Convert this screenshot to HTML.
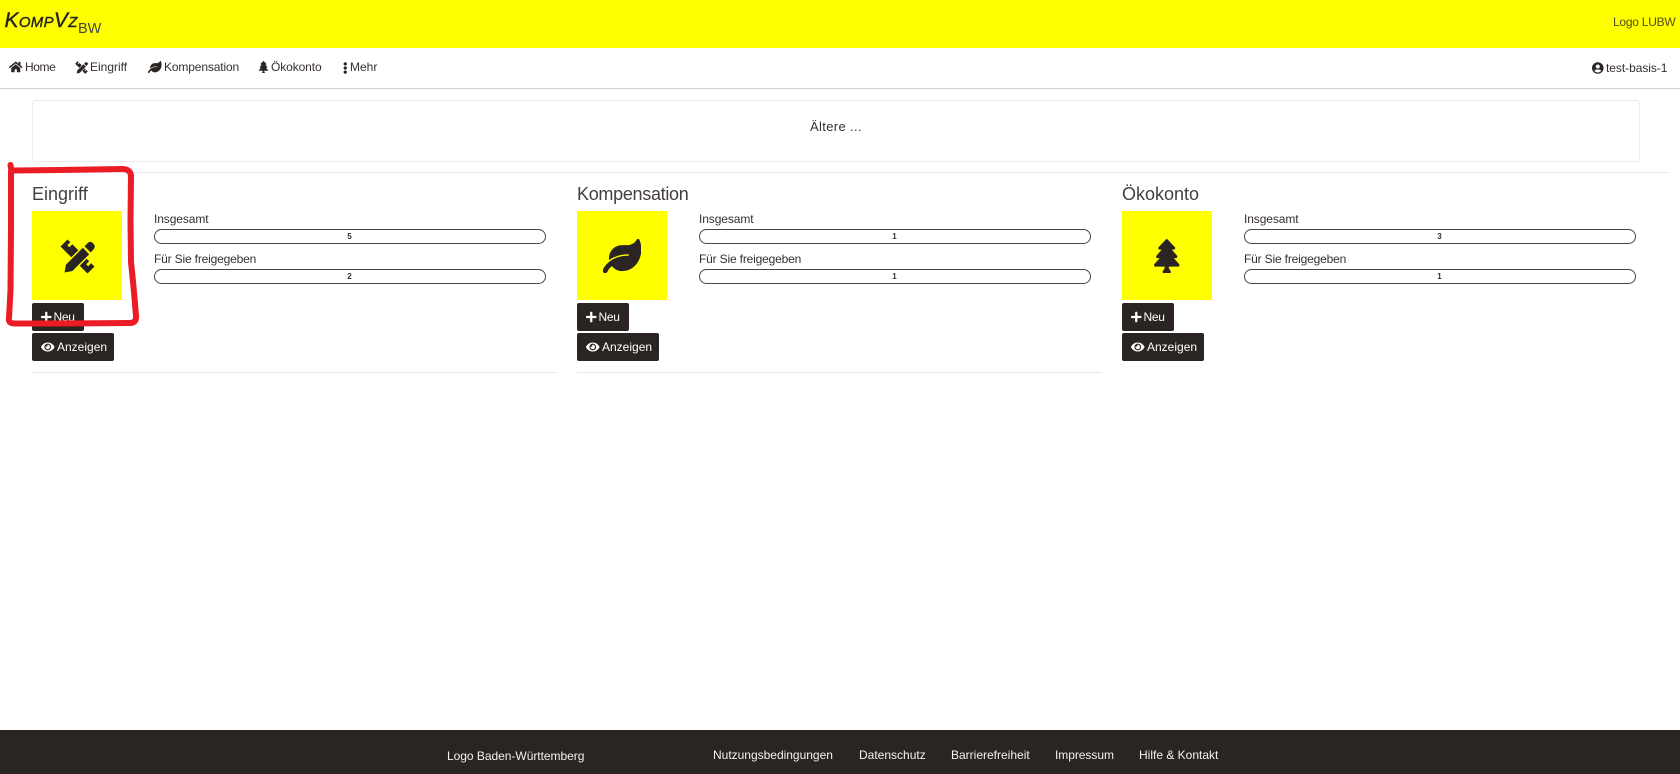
<!DOCTYPE html>
<html lang="de">
<head>
<meta charset="utf-8">
<title>KompVzBW</title>
<style>
html,body{margin:0;padding:0;background:#fff}
body{position:relative;width:1680px;height:774px;overflow:hidden;font-family:"Liberation Sans",sans-serif;font-size:12px;color:#35302d;filter:blur(.35px)}
.a{position:absolute;white-space:nowrap;line-height:16px}
svg.i{position:absolute;fill:#2a2522;display:block}
.hdr{position:absolute;left:0;top:0;width:1680px;height:47.5px;background:#ff0}
.navline{position:absolute;left:0;top:88px;width:1680px;height:1px;background:#d3cfc9}
.card{position:absolute;left:32px;top:100px;width:1606px;height:60px;border:1px solid #ececec;border-radius:3px}
.hr{position:absolute;height:1px;background:#e8e8e8}
.y{position:absolute;top:211px;width:90px;height:89px;background:#ff0}
.btn{position:absolute;height:28px;background:#2a2522;border-radius:2px}
.bar{position:absolute;width:390px;height:13px;border:1px solid #4a4543;border-radius:8px;background:#fff}
.num{position:absolute;width:392px;text-align:center;font-size:8px;font-weight:bold;line-height:15px}
.lab{position:absolute;white-space:nowrap;line-height:16px;letter-spacing:-.1px}
.h{position:absolute;top:184px;font-size:18px;line-height:20px;white-space:nowrap;color:#45403d}
.w{color:#fff;position:absolute;white-space:nowrap;line-height:16px}
.ftr{position:absolute;left:0;top:730px;width:1680px;height:44px;background:#2a2522}
.f{position:absolute;top:747px;color:#f2f2f2;white-space:nowrap;line-height:16px}
</style>
</head>
<body>
<svg width="0" height="0" style="position:absolute">
<symbol id="home" viewBox="0 0 576 512"><path d="M280.37 148.26L96 300.11V464a16 16 0 0 0 16 16l112.06-.29a16 16 0 0 0 15.92-16V368a16 16 0 0 1 16-16h64a16 16 0 0 1 16 16v95.64a16 16 0 0 0 16 16.05L464 480a16 16 0 0 0 16-16V300L295.67 148.26a12.19 12.19 0 0 0-15.3 0zM571.6 251.47L488 182.56V44.05a12 12 0 0 0-12-12h-56a12 12 0 0 0-12 12v72.61L318.47 43a48 48 0 0 0-61 0L4.34 251.47a12 12 0 0 0-1.6 16.9l25.5 31A12 12 0 0 0 45.15 301l235.22-193.74a12.19 12.19 0 0 1 15.3 0L530.9 301a12 12 0 0 0 16.9-1.6l25.5-31a12 12 0 0 0-1.7-16.93z"/></symbol>
<symbol id="pr" viewBox="4 4 35 35"><path d="M8.5 37.5L10 29.6L26.8 12.8L33.2 19.2L18.5 33.9L16.5 36ZM28.5 11.3L31.8 8Q34 6 36.3 7.6L37.9 9.2Q39.6 11.5 38 13.8L34.7 17.5ZM11.5 4.5L14.3 7.3L11.3 10.3L13.3 12.3L16.3 9.3L22.3 15.3L15.3 22.3L4.5 11.5ZM30.7 23.7L33.2 26.2L30.2 29.2L32.2 31.2L35.2 28.2L38.5 31.5L31.5 38.5L23.7 30.7Z"/></symbol>
<symbol id="leaf" viewBox="0 0 576 512"><path stroke="#2a2522" stroke-width="10" d="M546.2 9.7c-5.6-12.5-21.6-13-28.3-1.2C486.9 62.4 431.4 96 368 96h-80C182 96 96 182 96 288c0 7 .8 13.7 1.5 20.5C161.3 262.8 253.4 224 384 224c8.8 0 16 7.2 16 16s-7.2 16-16 16C132.6 256 26 410.1 2.4 468c-6.6 16.3 1.2 34.9 17.5 41.6 16.4 6.8 35-1.1 41.8-17.3 1.5-3.6 20.9-47.9 71.9-90.6 32.4 43.9 94 85.8 174.9 77.2C465.5 467.5 576 326.7 576 154.3c0-50.2-10.8-102.2-29.8-144.6z"/></symbol>
<symbol id="tree" viewBox="0 0 384 512"><path d="M378.31 378.49L298.42 288h30.63c9.01 0 16.98-5 20.78-13.06 3.8-8.04 2.55-17.26-3.28-24.05L268.42 160h28.89c9.1 0 17.3-5.35 20.86-13.61 3.52-8.13 1.86-17.59-4.24-24.08L203.66 4.83c-6.03-6.45-17.28-6.45-23.32 0L70.06 122.31c-6.1 6.49-7.75 15.95-4.24 24.08C69.38 154.65 77.59 160 86.69 160h28.89l-78.14 90.91c-5.81 6.78-7.06 15.99-3.27 24.04C37.97 283 45.93 288 54.95 288h30.63L5.69 378.49c-6 6.79-7.36 16.09-3.56 24.26 3.75 8.05 12 13.25 21.01 13.25H160v24.45l-30.29 48.4c-5.32 10.64 2.42 23.16 14.31 23.16h95.96c11.89 0 19.63-12.52 14.31-23.16L224 440.45V416h136.86c9.01 0 17.26-5.2 21.01-13.25 3.8-8.17 2.44-17.47-3.56-24.26z"/></symbol>
<symbol id="dots" viewBox="0 0 192 512"><path d="M96 184c39.8 0 72 32.2 72 72s-32.2 72-72 72-72-32.2-72-72 32.2-72 72-72zM24 80c0 39.8 32.2 72 72 72s72-32.2 72-72S135.8 8 96 8 24 40.2 24 80zm0 352c0 39.8 32.2 72 72 72s72-32.2 72-72-32.2-72-72-72-72 32.2-72 72z"/></symbol>
<symbol id="user" viewBox="0 0 496 512"><path d="M248 8C111 8 0 119 0 256s111 248 248 248 248-111 248-248S385 8 248 8zm0 96c48.6 0 88 39.4 88 88s-39.4 88-88 88-88-39.4-88-88 39.4-88 88-88zm0 344c-58.7 0-111.3-26.6-146.5-68.2 18.8-35.4 55.6-59.8 98.5-59.8 2.4 0 4.8.4 7.1 1.1 13 4.2 26.6 6.9 40.9 6.9 14.3 0 28-2.7 40.9-6.9 2.3-.7 4.7-1.1 7.1-1.1 42.9 0 79.7 24.4 98.5 59.8C359.3 421.4 306.7 448 248 448z"/></symbol>
<symbol id="plus" viewBox="0 0 448 512"><path d="M416 208H272V64c0-17.67-14.33-32-32-32h-32c-17.67 0-32 14.33-32 32v144H32c-17.67 0-32 14.33-32 32v32c0 17.67 14.33 32 32 32h144v144c0 17.67 14.33 32 32 32h32c17.67 0 32-14.33 32-32V304h144c17.67 0 32-14.33 32-32v-32c0-17.67-14.33-32-32-32z"/></symbol>
<symbol id="eye" viewBox="0 0 576 512"><path d="M572.52 241.4C518.29 135.59 410.93 64 288 64S57.68 135.64 3.48 241.41a32.35 32.35 0 0 0 0 29.19C57.71 376.41 165.07 448 288 448s230.32-71.64 284.52-177.41a32.35 32.35 0 0 0 0-29.19zM288 400a144 144 0 1 1 144-144 143.93 143.93 0 0 1-144 144zm0-240a95.31 95.31 0 0 0-25.31 3.79 47.85 47.85 0 0 1-66.9 66.9A95.78 95.78 0 1 0 288 160z"/></symbol>
</svg>

<div class="hdr"></div>
<div class="a" style="left:4.5px;top:9px;line-height:24px;font-size:21px;font-style:italic;color:#2a2522;-webkit-text-stroke:.4px #2a2522;letter-spacing:.3px">K<span style="font-size:15px">OMP</span>V<span style="font-size:15px">Z</span></div>
<div class="a" style="left:78px;top:20px;line-height:18px;font-size:14.5px;color:#444">BW</div>
<div class="a" style="left:1613px;top:14px;color:#4f4f10;letter-spacing:-.25px">Logo LUBW</div>

<svg class="i" style="left:9px;top:61px" width="13.5" height="12"><use href="#home"/></svg>
<div class="a" style="left:25px;top:59px;letter-spacing:-.4px">Home</div>
<svg class="i" style="left:75px;top:61px" width="13" height="13"><use href="#pr"/></svg>
<div class="a" style="left:90px;top:59px">Eingriff</div>
<svg class="i" style="left:148px;top:61px" width="13.5" height="12"><use href="#leaf"/></svg>
<div class="a" style="left:164px;top:59px;letter-spacing:-.14px">Kompensation</div>
<svg class="i" style="left:258.5px;top:61px" width="9" height="12"><use href="#tree"/></svg>
<div class="a" style="left:271px;top:59px;letter-spacing:-.1px">Ökokonto</div>
<svg class="i" style="left:343px;top:62px" width="4.5" height="12"><use href="#dots"/></svg>
<div class="a" style="left:350px;top:59px">Mehr</div>
<svg class="i" style="left:1592px;top:62px" width="11.6" height="12"><use href="#user"/></svg>
<div class="a" style="left:1606px;top:60px;letter-spacing:-.05px">test-basis-1</div>
<div class="navline"></div>

<div class="card"></div>
<div class="a" style="left:810px;top:119px;font-size:13px;letter-spacing:.35px">Ältere ...</div>
<div class="hr" style="left:12px;top:172px;width:1656px"></div>

<!-- Eingriff -->
<div class="h" style="left:32px">Eingriff</div>
<div class="y" style="left:32px"></div>
<svg class="i" style="left:60px;top:239px" width="35" height="35"><use href="#pr"/></svg>
<div class="btn" style="left:32px;top:303px;width:52px"></div>
<svg class="i" style="left:41px;top:311px;fill:#fff" width="10.5" height="12"><use href="#plus"/></svg>
<div class="w" style="left:53.5px;top:309px;letter-spacing:-.3px">Neu</div>
<div class="btn" style="left:32px;top:333px;width:82px"></div>
<svg class="i" style="left:41px;top:341px;fill:#fff" width="13.5" height="12"><use href="#eye"/></svg>
<div class="w" style="left:57px;top:339px">Anzeigen</div>
<div class="lab" style="left:154px;top:211px">Insgesamt</div>
<div class="bar" style="left:153.5px;top:229px"></div><div class="num" style="left:153.5px;top:229px">5</div>
<div class="lab" style="left:154px;top:251px;letter-spacing:-.17px">Für Sie freigegeben</div>
<div class="bar" style="left:153.5px;top:269px"></div><div class="num" style="left:153.5px;top:269px">2</div>
<div class="hr" style="left:32px;top:372px;width:525px"></div>

<!-- Kompensation -->
<div class="h" style="left:577px;letter-spacing:-.3px">Kompensation</div>
<div class="y" style="left:577px"></div>
<svg class="i" style="left:603px;top:239px" width="38" height="34"><use href="#leaf"/></svg>
<div class="btn" style="left:577px;top:303px;width:52px"></div>
<svg class="i" style="left:586px;top:311px;fill:#fff" width="10.5" height="12"><use href="#plus"/></svg>
<div class="w" style="left:598.5px;top:309px;letter-spacing:-.3px">Neu</div>
<div class="btn" style="left:577px;top:333px;width:82px"></div>
<svg class="i" style="left:586px;top:341px;fill:#fff" width="13.5" height="12"><use href="#eye"/></svg>
<div class="w" style="left:602px;top:339px">Anzeigen</div>
<div class="lab" style="left:699px;top:211px">Insgesamt</div>
<div class="bar" style="left:698.5px;top:229px"></div><div class="num" style="left:698.5px;top:229px">1</div>
<div class="lab" style="left:699px;top:251px;letter-spacing:-.17px">Für Sie freigegeben</div>
<div class="bar" style="left:698.5px;top:269px"></div><div class="num" style="left:698.5px;top:269px">1</div>
<div class="hr" style="left:577px;top:372px;width:525px"></div>

<!-- Ökokonto -->
<div class="h" style="left:1122px">Ökokonto</div>
<div class="y" style="left:1122px"></div>
<svg class="i" style="left:1154px;top:239px" width="25.5" height="34"><use href="#tree"/></svg>
<div class="btn" style="left:1122px;top:303px;width:52px"></div>
<svg class="i" style="left:1131px;top:311px;fill:#fff" width="10.5" height="12"><use href="#plus"/></svg>
<div class="w" style="left:1143.5px;top:309px;letter-spacing:-.3px">Neu</div>
<div class="btn" style="left:1122px;top:333px;width:82px"></div>
<svg class="i" style="left:1131px;top:341px;fill:#fff" width="13.5" height="12"><use href="#eye"/></svg>
<div class="w" style="left:1147px;top:339px">Anzeigen</div>
<div class="lab" style="left:1244px;top:211px">Insgesamt</div>
<div class="bar" style="left:1243.5px;top:229px"></div><div class="num" style="left:1243.5px;top:229px">3</div>
<div class="lab" style="left:1244px;top:251px;letter-spacing:-.17px">Für Sie freigegeben</div>
<div class="bar" style="left:1243.5px;top:269px"></div><div class="num" style="left:1243.5px;top:269px">1</div>

<!-- red annotation -->
<svg style="position:absolute;left:0;top:0" width="1680" height="774" fill="none">
<path d="M10.5 165 L11.5 171 L14 170.5 L60 170 L122 169 Q130.5 169 131 176 L130.5 220 L131 262 Q134 290 136 316 Q136.5 323 130 323 L60 323.5 L15 323.5 Q8 323.5 9 318 L10.5 290 L11 230 L11 171" stroke="#ec1c24" stroke-width="6" stroke-linecap="round" stroke-linejoin="round"/>
</svg>

<div class="ftr"></div>
<div class="f" style="left:447px;top:748px;letter-spacing:-.03px">Logo Baden-Württemberg</div>
<div class="f" style="left:713px;letter-spacing:-.01px">Nutzungsbedingungen</div>
<div class="f" style="left:859px">Datenschutz</div>
<div class="f" style="left:951px">Barrierefreiheit</div>
<div class="f" style="left:1055px;letter-spacing:-.05px">Impressum</div>
<div class="f" style="left:1139px">Hilfe &amp; Kontakt</div>
</body>
</html>
